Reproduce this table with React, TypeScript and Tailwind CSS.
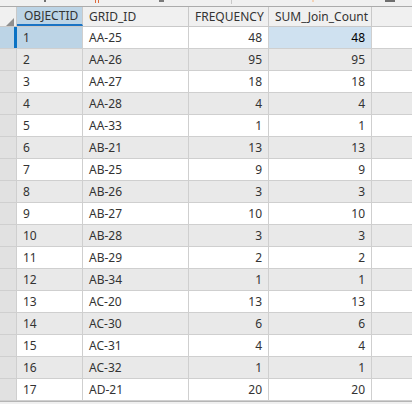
import clsx from 'clsx';

const rows: [number, string, number, number][] = [
  [1, 'AA-25', 48, 48],
  [2, 'AA-26', 95, 95],
  [3, 'AA-27', 18, 18],
  [4, 'AA-28', 4, 4],
  [5, 'AA-33', 1, 1],
  [6, 'AB-21', 13, 13],
  [7, 'AB-25', 9, 9],
  [8, 'AB-26', 3, 3],
  [9, 'AB-27', 10, 10],
  [10, 'AB-28', 3, 3],
  [11, 'AB-29', 2, 2],
  [12, 'AB-34', 1, 1],
  [13, 'AC-20', 13, 13],
  [14, 'AC-30', 6, 6],
  [15, 'AC-31', 4, 4],
  [16, 'AC-32', 1, 1],
  [17, 'AD-21', 20, 20],
];

export default function App() {
  return (
    <div
      className="w-[412px] h-[404px] overflow-hidden bg-[#f0f0f0] text-[12px] text-[#333]"
      style={{ fontFamily: '"Noto Sans", "Open Sans", sans-serif' }}
    >
      {/* toolbar remnants */}
      <div className="relative h-[7px] border-b border-[#ababab]">
        <span className="absolute left-[44px] top-0 w-[2px] h-[2px] bg-[#707070]" />
        <span className="absolute left-[95px] top-0 w-[1px] h-[3px] bg-[#e06a3a]" />
        <span className="absolute left-[98px] top-0 w-[1px] h-[3px] bg-[#e06a3a]" />
        <span className="absolute left-[159px] top-0 w-[5px] h-[2px] bg-[#7a7a7a]" />
        <span className="absolute left-[231px] top-0 w-[1px] h-[4px] bg-[#c8c8c8]" />
        <span className="absolute left-[312px] top-0 w-[2px] h-[2px] bg-[#f3d2b6]" />
        <span className="absolute left-[385px] top-0 w-[10px] h-[2px] bg-[#6e6e6e]" />
      </div>

      {/* header */}
      <div className="flex h-[20px] border-b border-[#c9c9c9]">
        <div className="relative w-[17px] shrink-0 border-r border-[#c9c9c9]">
          <svg className="absolute left-[6px] top-[11px]" width="8" height="8" viewBox="0 0 8 8">
            <path d="M8 0 L8 8 L0 8 Z" fill="#8f8f8f" />
          </svg>
        </div>
        <div className="w-[66px] shrink-0 bg-[#bcd4e6] border-r border-[#c9c9c9] border-b-2 border-b-[#1a73c4] pl-[7px] leading-[18px]">
          OBJECTID
        </div>
        <div className="w-[106px] shrink-0 border-r border-[#c9c9c9] pl-[6px] leading-[19px]">GRID_ID</div>
        <div className="w-[80px] shrink-0 border-r border-[#c9c9c9] pl-[6px] leading-[19px] whitespace-nowrap">FREQUENCY</div>
        <div className="w-[103px] shrink-0 border-r border-[#c9c9c9] pl-[6px] leading-[19px] whitespace-nowrap">SUM_Join_Count</div>
        <div className="flex-1" />
      </div>

      {/* body */}
      {rows.map(([id, grid, freq, sum], i) => {
        const sel = i === 0;
        const even = i % 2 === 1;
        return (
          <div
            key={id}
            className={clsx('flex h-[22px] border-b border-[#cfcfcf] leading-[21px]', even ? 'bg-[#e9e9e9]' : 'bg-white')}
          >
            <div
              className={clsx(
                'w-[17px] shrink-0 border-r border-[#cfcfcf]',
                sel ? 'bg-[#bcd4e6] border-r-[3px] border-r-[#0a72c4]' : 'bg-[#e1e1e1]'
              )}
            />
            <div className={clsx('w-[66px] shrink-0 border-r border-[#cfcfcf] pl-[6px]', sel && 'bg-[#bcd4e6]')}>{id}</div>
            <div className="w-[106px] shrink-0 border-r border-[#cfcfcf] pl-[6px]">{grid}</div>
            <div className="w-[80px] shrink-0 border-r border-[#cfcfcf] pr-[6px] text-right">{freq}</div>
            <div className={clsx('w-[103px] shrink-0 border-r border-[#cfcfcf] pr-[6px] text-right', sel && 'bg-[#cfe1f0] text-black')}>
              {sum}
            </div>
            <div className="flex-1" />
          </div>
        );
      })}
      <div className="h-[1px] bg-[#b5b5b5]" />
    </div>
  );
}
